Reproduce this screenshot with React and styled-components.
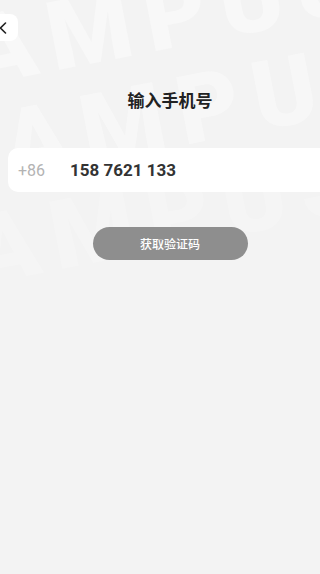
import React from 'react'
import styled, { createGlobalStyle } from 'styled-components'

const Global = createGlobalStyle`
  html, body {
    margin: 0;
    padding: 0;
    background: #f3f3f3;
    overflow: hidden;
  }
  body {
    font-family: Roboto, "Noto Sans CJK SC", sans-serif;
  }
`

function Watermark() {
  const rows = [
    { x: -85, y: 52, o: 1 },
    { x: -70, y: 150, o: 0.9 },
    { x: -120, y: 248, o: 0.55 },
  ]
  return (
    <MarkLayer aria-hidden="true">
      <svg width="320" height="300" viewBox="0 0 320 300">
        <g transform="rotate(-11 160 150)">
          {rows.map((r, i) => (
            <text
              key={i}
              x={r.x}
              y={r.y}
              fontFamily="Roboto, sans-serif"
              fontWeight="900"
              fontSize="96"
              fill="#f8f8f8"
              opacity={r.o}
              letterSpacing="14"
            >
              CAMPUS
            </text>
          ))}
        </g>
      </svg>
    </MarkLayer>
  )
}

function App() {
  return (
    <Page>
      <Global />
      <Watermark />
      <Header>
        <BackButton>
          <svg width="8" height="12" viewBox="0 0 8 12">
            <path d="M6.5 1 L1.5 6 L6.5 11" fill="none" stroke="#222" strokeWidth="1.6" strokeLinecap="round" strokeLinejoin="round" />
          </svg>
        </BackButton>
      </Header>
      <Main>
        <Title>输入手机号</Title>
        <PhoneField>
          <Prefix>+86</Prefix>
          <Number>158 7621 133</Number>
        </PhoneField>
        <CodeButton>获取验证码</CodeButton>
      </Main>
    </Page>
  )
}

export default App

const Page = styled.div`
  position: relative;
  width: 320px;
  height: 574px;
  overflow: hidden;
  background: #f3f3f3;
`

const MarkLayer = styled.div`
  position: absolute;
  left: 0;
  top: 0;
  pointer-events: none;
`

const Header = styled.div`
  position: relative;
  display: flex;
  padding-top: 14px;
  height: 27px;
`

const BackButton = styled.div`
  margin-left: -10px;
  width: 28px;
  height: 27px;
  background: #fff;
  border-radius: 8px;
  display: flex;
  align-items: center;
  justify-content: flex-end;
  padding-right: 10px;
  box-sizing: border-box;
  svg { margin-right: 1px; }
`

const Main = styled.div`
  position: relative;
  margin-left: 8px;
  width: 324px;
  display: flex;
  flex-direction: column;
  align-items: center;
`

const Title = styled.h1`
  margin: 48px 0 0;
  font-size: 17px;
  line-height: 22px;
  font-weight: 700;
  color: #222;
  font-family: "Noto Sans CJK SC", sans-serif;
`

const PhoneField = styled.div`
  margin-top: 37px;
  align-self: stretch;
  height: 44px;
  background: #fff;
  border-radius: 10px;
  display: flex;
  align-items: center;
  padding-left: 10px;
`

const Prefix = styled.span`
  width: 52px;
  font-size: 16px;
  color: #b3b3b3;
`

const Number = styled.span`
  font-size: 17px;
  font-weight: 700;
  color: #333;
`

const CodeButton = styled.div`
  margin-top: 35px;
  width: 155px;
  height: 33px;
  border-radius: 17px;
  background: #8e8e8e;
  color: #fff;
  font-size: 12px;
  font-weight: 500;
  font-family: "Noto Sans CJK SC", sans-serif;
  display: flex;
  align-items: center;
  justify-content: center;
`
